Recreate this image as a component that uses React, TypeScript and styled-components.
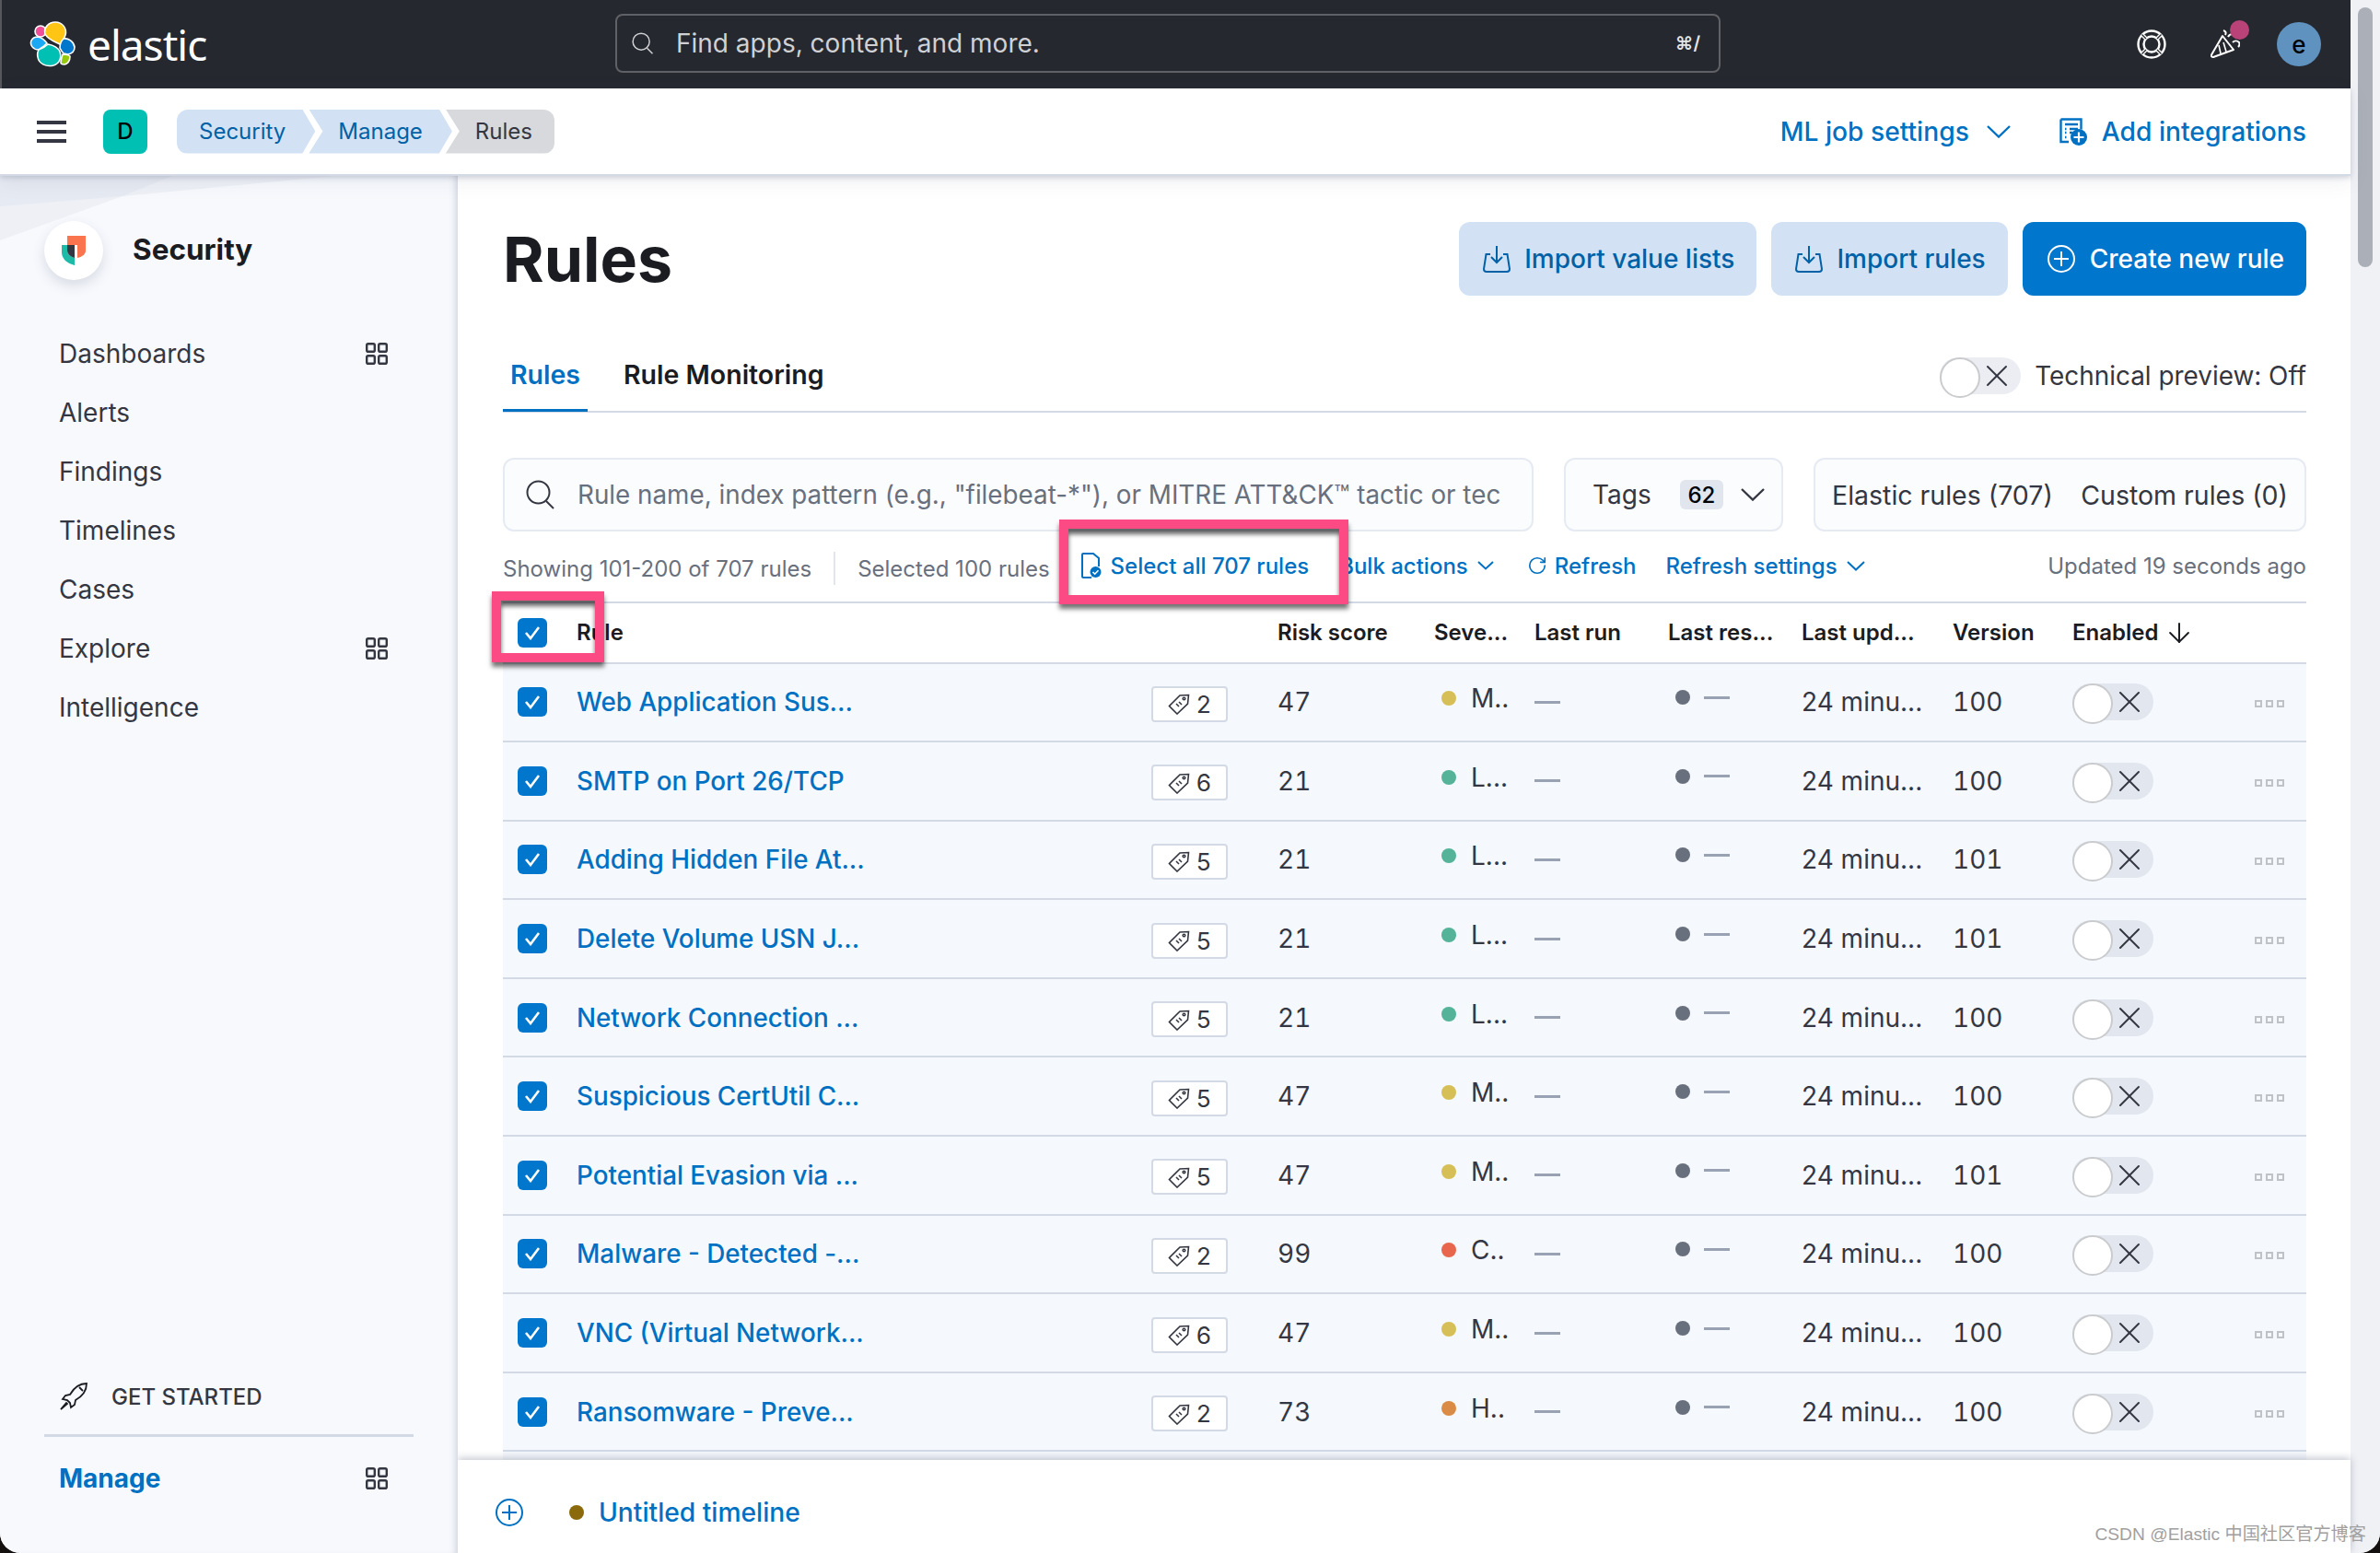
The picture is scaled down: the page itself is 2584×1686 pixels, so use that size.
import React from 'react';
import styled, { createGlobalStyle } from 'styled-components';
import { RotateCw, X, ArrowDown } from 'lucide-react';

const GlobalStyle = createGlobalStyle`
  html, body {
    margin: 0;
    padding: 0;
    background: #14100f;
    font-family: Inter, "Noto Sans", "Liberation Sans", sans-serif;
  }
  * { box-sizing: border-box; }
`;

const Page = styled.div`
  position: relative;
  width: 2584px;
  height: 1686px;
  display: flex;
  overflow: hidden;
  background: #fff;
  border-radius: 0 0 22px 22px;
  color: #343741;
`;

const Window = styled.div`
  width: 2552px;
  display: flex;
  flex-direction: column;
`;

const ScrollTrack = styled.div`
  width: 32px;
  background: #f0f1f5;
  padding: 8px;
`;

const ScrollThumb = styled.div`
  height: 282px;
  background: #abb0b8;
  border-radius: 8px;
`;

const TopBar = styled.header`
  height: 96px;
  flex: none;
  background: #25282f;
  border-left: 2px solid #55575c;
  display: flex;
  align-items: center;
  padding: 0 32px 0 30px;
`;

const Brand = styled.div`
  width: 636px;
  display: flex;
  align-items: center;
  gap: 13px;
  color: #fff;
  font-family: "Noto Sans", sans-serif;
  font-size: 46px;
  font-weight: 400;
  letter-spacing: -1px;
`;

const GlobalSearch = styled.div`
  width: 1200px;
  height: 64px;
  border: 2px solid #5f6166;
  border-radius: 8px;
  display: flex;
  align-items: center;
  padding: 0 20px 0 16px;
  gap: 24px;
  color: #d0d1d4;
  font-size: 28px;
  margin-top: -2px;
`;

const Shortcut = styled.span`
  margin-left: auto;
  font-size: 20px;
  font-weight: 600;
  color: #e4e5e7;
`;

const TopActions = styled.div`
  margin-left: auto;
  display: flex;
  align-items: center;
  color: #fff;
`;

const Cheer = styled.div`
  position: relative;
  display: flex;
  margin: 0 40px 0 48px;
`;

const CheerDot = styled.span`
  position: absolute;
  top: -10px;
  right: -10px;
  width: 21px;
  height: 21px;
  border-radius: 50%;
  background: #b94379;
`;

const Avatar = styled.div`
  width: 48px;
  height: 48px;
  border-radius: 50%;
  background: #6092c0;
  color: #000;
  font-size: 26px;
  font-weight: 500;
  display: flex;
  align-items: center;
  justify-content: center;
`;

const SubBar = styled.div`
  position: relative;
  z-index: 3;
  height: 95px;
  flex: none;
  background: #fff;
  border-bottom: 2px solid #d3dae6;
  box-shadow: 0 2px 5px rgba(80, 90, 120, 0.22), 0 6px 20px rgba(90, 100, 130, 0.1);
  display: flex;
  align-items: center;
  padding: 0 48px 0 40px;
`;

const Burger = styled.div`
  width: 32px;
  height: 24px;
  margin-right: 40px;
  border-top: 4px solid #343741;
  border-bottom: 4px solid #343741;
  position: relative;
  &::after {
    content: '';
    position: absolute;
    left: 0;
    right: 0;
    top: 6px;
    height: 4px;
    background: #343741;
  }
`;

const SpaceBadge = styled.div`
  width: 48px;
  height: 48px;
  border-radius: 8px;
  background: #00bfb3;
  color: #000;
  font-size: 24px;
  font-weight: 500;
  display: flex;
  align-items: center;
  justify-content: center;
  margin-right: 32px;
`;

const Crumbs = styled.nav`
  display: flex;
  align-items: center;
`;

const Crumb = styled.span<{ $active?: boolean; $first?: boolean }>`
  height: 48px;
  display: flex;
  align-items: center;
  font-size: 24px;
  background: ${(p) => (p.$active ? '#d8d9dc' : '#d2e2f4')};
  color: ${(p) => (p.$active ? '#343741' : '#0061a6')};
  padding: ${(p) => (p.$first ? '0 32px 0 24px' : p.$active ? '0 24px 0 32px' : '0 32px 0 32px')};
  margin-left: ${(p) => (p.$first ? '0' : '-7px')};
  border-radius: ${(p) => (p.$first ? '12px 0 0 12px' : p.$active ? '0 12px 12px 0' : '0')};
  clip-path: ${(p) =>
    p.$first
      ? 'polygon(0 0, calc(100% - 14px) 0, 100% 50%, calc(100% - 14px) 100%, 0 100%)'
      : p.$active
      ? 'polygon(0 0, 100% 0, 100% 100%, 0 100%, 15px 50%)'
      : 'polygon(0 0, calc(100% - 14px) 0, 100% 50%, calc(100% - 14px) 100%, 0 100%, 15px 50%)'};
`;

const SubActions = styled.div`
  margin-left: auto;
  display: flex;
  align-items: center;
  color: #0071c2;
  font-size: 28.2px;
  font-weight: 500;
`;

const SubLink = styled.span<{ $gap: number }>`
  display: flex;
  align-items: center;
  gap: ${(p) => p.$gap}px;
  margin-left: 53px;
`;

const Body = styled.div`
  flex: 1;
  min-height: 0;
  display: flex;
`;

const Sidebar = styled.aside`
  position: relative;
  z-index: 2;
  width: 497px;
  flex: none;
  background: #f7f9fd;
  box-shadow: inset -7px 0 9px -6px rgba(80, 90, 120, 0.3);
  display: flex;
  flex-direction: column;
  padding: 49px 48px 49px;
  overflow: hidden;
`;

const SidebarArt = styled.svg`
  position: absolute;
  left: 0;
  top: 0;
`;

const SolutionHead = styled.div`
  position: relative;
  display: flex;
  align-items: center;
  gap: 32px;
  font-size: 31.5px;
  font-weight: 700;
  color: #1a1c21;
  margin-bottom: 48px;
`;

const SolutionName = styled.span`
  padding-bottom: 4px;
`;

const SolutionLogo = styled.div`
  width: 64px;
  height: 64px;
  border-radius: 50%;
  background: #fff;
  box-shadow: 0 6px 14px rgba(60, 70, 100, 0.16);
  display: flex;
  align-items: center;
  justify-content: center;
`;

const NavList = styled.div`
  display: flex;
  flex-direction: column;
`;

const NavItem = styled.div<{ $active?: boolean }>`
  height: 64px;
  padding: 0 28px 0 16px;
  display: flex;
  align-items: center;
  justify-content: space-between;
  font-size: 28px;
  font-weight: ${(p) => (p.$active ? 700 : 400)};
  color: ${(p) => (p.$active ? '#0071c2' : '#343741')};
`;

const SideFoot = styled.div`
  margin-top: auto;
`;

const GetStarted = styled.div`
  display: flex;
  align-items: center;
  gap: 26px;
  padding: 0 0 26px 17px;
  font-size: 24px;
  font-weight: 500;
  color: #343741;
  border-bottom: 3px solid #d3dae6;
  margin-bottom: 13px;
`;

const Workspace = styled.div`
  flex: 1;
  min-width: 0;
  display: flex;
  flex-direction: column;
`;

const Scroller = styled.main`
  flex: 1;
  min-height: 0;
  overflow: hidden;
  padding: 50px 48px 0 49px;
`;

const TitleRow = styled.div`
  display: flex;
  align-items: center;
  justify-content: space-between;
  height: 80px;
`;

const Title = styled.h1`
  margin: 0;
  font-size: 68px;
  font-weight: 700;
  color: #1a1c21;
`;

const Buttons = styled.div`
  display: flex;
  gap: 16px;
`;

const Button = styled.div<{ $fill?: boolean }>`
  height: 80px;
  border-radius: 12px;
  padding: ${(p) => (p.$fill ? '0 24px 0 27px' : '0 24px 0 25px')};
  display: flex;
  align-items: center;
  gap: ${(p) => (p.$fill ? 16 : 14)}px;
  font-size: 28px;
  font-weight: 500;
  background: ${(p) => (p.$fill ? '#0077cc' : '#d2e2f4')};
  color: ${(p) => (p.$fill ? '#fff' : '#0061a6')};
`;

const TabBar = styled.div`
  margin-top: 55px;
  height: 72px;
  border-bottom: 2px solid #d3dae6;
  display: flex;
  align-items: center;
  gap: 31px;
`;

const Tab = styled.div<{ $active?: boolean }>`
  height: 72px;
  padding: 0 8px 6px;
  display: flex;
  align-items: center;
  font-size: 28.5px;
  font-weight: 600;
  color: ${(p) => (p.$active ? '#0071c2' : '#1a1c21')};
  border-bottom: 3px solid ${(p) => (p.$active ? '#0071c2' : 'transparent')};
`;

const Preview = styled.div`
  margin-left: auto;
  display: flex;
  align-items: center;
  gap: 15px;
  font-size: 27.9px;
  color: #343741;
  padding-bottom: 6px;
`;

const Switch = styled.div<{ $light?: boolean }>`
  position: relative;
  width: 88px;
  height: 40px;
  border-radius: 20px;
  background: ${(p) => (p.$light ? '#ebedf2' : '#e2e6ee')};
  display: flex;
  align-items: center;
  justify-content: flex-end;
  padding-right: 6px;
  flex: none;
  color: #343741;
  &::before {
    content: '';
    position: absolute;
    left: 0;
    top: 0;
    width: 40px;
    height: 40px;
    border-radius: 50%;
    background: #fff;
    border: 2px solid #c9cbcd;
  }
`;

const FilterRow = styled.div`
  margin-top: 49px;
  display: flex;
  gap: 33px;
`;

const Field = styled.div<{ $width?: number; $pad: string; $size?: number }>`
  height: 80px;
  background: #fbfcfd;
  border: 2px solid #e6ebf3;
  border-radius: 12px;
  display: flex;
  align-items: center;
  justify-content: space-between;
  font-size: ${(p) => p.$size ?? 28}px;
  color: #343741;
  padding: ${(p) => p.$pad};
  ${(p) => (p.$width ? `width: ${p.$width}px; flex: none;` : 'flex: 1; min-width: 0; justify-content: flex-start;')}
`;

const Placeholder = styled.span`
  margin-left: 24px;
  color: #69707d;
  white-space: nowrap;
  overflow: hidden;
`;

const TagCount = styled.span`
  width: 47px;
  height: 32px;
  margin-left: 12px;
  border-radius: 6px;
  background: #e0e5ee;
  color: #000;
  font-size: 24px;
  font-weight: 500;
  display: flex;
  align-items: center;
  justify-content: center;
`;

const UtilBar = styled.div`
  height: 76px;
  display: flex;
  align-items: center;
  font-size: 24px;
  color: #69707d;
  white-space: nowrap;
`;

const UtilText = styled.span`
  padding-top: 4px;
`;

const UtilDivider = styled.span`
  width: 2px;
  height: 36px;
  background: #e3e6ec;
  margin: 4px 24px 0 24px;
`;

const UtilLink = styled.span<{ $left?: number; $gap?: number }>`
  display: flex;
  align-items: center;
  gap: ${(p) => p.$gap ?? 10}px;
  color: #0071c2;
  font-weight: 500;
  margin-left: ${(p) => p.$left ?? 0}px;
  padding-bottom: 2px;
`;

const Updated = styled.span`
  margin-left: auto;
  padding-bottom: 2px;
`;

const cols = '80px 761px 170px 109px 145px 145px 164px 130px 150px 1fr';

const HeadRow = styled.div`
  display: grid;
  grid-template-columns: ${cols};
  align-items: center;
  height: 67.5px;
  border-top: 2px solid #d3dae6;
  border-bottom: 2px solid #d3dae6;
  font-size: 24px;
  font-weight: 600;
  color: #1a1c21;
  white-space: nowrap;
`;

const HeadCell = styled.span`
  display: flex;
  align-items: center;
  gap: 6px;
`;

const Row = styled.div`
  display: grid;
  grid-template-columns: ${cols};
  align-items: center;
  height: 85.6px;
  background: #f5f8fc;
  border-bottom: 2px solid #d3dae6;
  font-size: 28px;
  color: #343741;
  white-space: nowrap;
`;

const NumCell = styled.span`
  font-variant-numeric: tabular-nums;
`;

const CheckCell = styled.div`
  display: flex;
  padding-left: 16px;
`;

const Check = styled.span`
  width: 32px;
  height: 32px;
  border-radius: 6px;
  background: #0077cc;
  display: flex;
  align-items: center;
  justify-content: center;
`;

const RuleCell = styled.div`
  display: flex;
  align-items: center;
  justify-content: space-between;
  padding-right: 54px;
`;

const RuleName = styled.span`
  color: #0071c2;
  font-size: 27.8px;
  font-weight: 500;
`;

const TagBadge = styled.span`
  width: 83px;
  height: 39px;
  margin-top: 4px;
  background: #fff;
  border: 2px solid #d3dae6;
  border-radius: 4px;
  display: flex;
  align-items: center;
  justify-content: center;
  gap: 7px;
  font-size: 26px;
  font-variant-numeric: tabular-nums;
`;

const Severity = styled.div`
  display: flex;
  align-items: center;
  gap: 16px;
  padding: 0 0 8px 8px;
`;

const Dot = styled.span<{ $color: string }>`
  width: 16px;
  height: 16px;
  border-radius: 50%;
  background: ${(p) => p.$color};
  flex: none;
`;

const Dash = styled.span`
  display: block;
  width: 28px;
  height: 3px;
  background: #98a2b3;
`;

const Result = styled.div`
  display: flex;
  align-items: center;
  gap: 15px;
  padding: 0 0 10px 8px;
`;

const MoreDots = styled.div`
  display: flex;
  justify-content: flex-end;
  gap: 4px;
  padding: 4px 24px 0 0;
`;

const MoreDot = styled.span`
  width: 8px;
  height: 8px;
  border: 2px solid #bfc2c7;
`;

const TimelineBar = styled.div`
  position: relative;
  z-index: 1;
  height: 101px;
  flex: none;
  background: #fff;
  box-shadow: 0 -2px 8px rgba(60, 70, 100, 0.3);
  display: flex;
  align-items: center;
  padding: 12px 0 0 41px;
  color: #0071c2;
  font-size: 28.2px;
  font-weight: 500;
`;

const TimelineDot = styled.span`
  width: 16px;
  height: 16px;
  border-radius: 50%;
  background: #8a6a0a;
  margin: 0 16px 0 50px;
`;

const Highlight = styled.div<{ $x: number; $y: number; $w: number; $h: number }>`
  position: absolute;
  left: ${(p) => p.$x}px;
  top: ${(p) => p.$y}px;
  width: ${(p) => p.$w}px;
  height: ${(p) => p.$h}px;
  border: 10px solid #fc4a85;
  box-shadow: 0 5px 5px rgba(0, 0, 0, 0.55), inset 0 6px 5px rgba(0, 0, 0, 0.6);
  z-index: 6;
`;

const Watermark = styled.div`
  position: absolute;
  right: 15px;
  bottom: 8px;
  z-index: 7;
  font-family: "Liberation Sans", "Noto Sans CJK SC", sans-serif;
  font-size: 19.2px;
  color: #a0a0a0;
`;

const ElasticLogo = () => (
  <svg width="50" height="50" viewBox="0 0 50 50">
    <g stroke="#fff" strokeWidth="1.6">
      <ellipse cx="12" cy="11" rx="6" ry="6" fill="#f04e98" />
      <path d="M17 14c-2-7 4-13 11-13 8 0 13 7 11 14-1 4-4 7-6 10-6-3-13-5-16-11z" fill="#fec514" />
      <path d="M9 17c5 1 8 4 10 7-3 3-6 5-9 7C4 31 0 26 2 21c1-2 4-4 7-4z" fill="#1ba9f5" />
      <path d="M37 19c5-1 11 3 12 9 0 4-3 7-7 8-2 0-4-1-5-1-2-2-3-4-4-6 0-4 2-8 4-10z" fill="#0077cc" />
      <path d="M20 25c6 1 11 4 13 8 2 6 0 13-7 15-8 2-16-2-17-9-1-4 0-6 1-8 3-1 7-3 10-6z" fill="#00bfb3" />
      <path d="M36 36c3 0 7 1 8 2 0 4-2 8-6 9-2 0-4 0-4-2 0-3 1-6 2-9z" fill="#93c90e" />
    </g>
  </svg>
);

const SecurityLogo = () => (
  <svg width="26" height="32" viewBox="0 0 26 32">
    <path d="M6 0H26V16C26 20 22 23 17 24V10H6z" fill="#fa744e" />
    <path d="M0 10H6V16C6 20 10 23 14 24V32C6 30 0 25 0 18z" fill="#1ebaa8" />
    <path d="M6 10H14V24C10 23 6 20 6 16z" fill="#343741" />
  </svg>
);

const SearchIcon = ({ size = 24, color = 'currentColor' }: { size?: number; color?: string }) => (
  <svg width={size} height={size} viewBox="0 0 32 32" fill="none" stroke={color} strokeWidth="2">
    <circle cx="13.5" cy="13.5" r="12" />
    <path d="M22 23l8 8" />
  </svg>
);

const Chevron = ({ w, h, sw = 2.4 }: { w: number; h: number; sw?: number }) => (
  <svg width={w} height={h} viewBox={`0 0 ${w} ${h}`} fill="none" stroke="currentColor" strokeWidth={sw}>
    <path d={`M1 1L${w / 2} ${h - 1.5}L${w - 1} 1`} />
  </svg>
);

const LifeRing = () => (
  <svg width="32" height="32" viewBox="0 0 32 32" fill="none" stroke="#fff" strokeWidth="2.4">
    <circle cx="16" cy="16" r="14.5" />
    <circle cx="16" cy="16" r="8.5" />
    <path d="M5.5 5.5l4.5 4.5M26.5 5.5L22 10M5.5 26.5L10 22M26.5 26.5L22 22" strokeWidth="4" />
    <path d="M5.5 5.5l4.5 4.5M26.5 5.5L22 10M5.5 26.5L10 22M26.5 26.5L22 22" stroke="#25282f" strokeWidth="1.4" />
  </svg>
);

const CheerIcon = () => (
  <svg width="32" height="32" viewBox="0 0 32 32" fill="none" stroke="#fff" strokeWidth="2">
    <path d="M13 7l12 15-22 8c-1.5 0-2.5-1-2-2.5z" strokeLinejoin="round" />
    <path d="M9 17l2 9M14 14l3 10" strokeWidth="1.6" />
    <path d="M14 1c3 1 3 3 2 5M19 8c1-2 3-3 5-3M24 14c2-2 5-2 7 0 1 2 0 4-1 5" />
  </svg>
);

const GridIcon = () => (
  <svg width="24" height="24" viewBox="0 0 24 24" fill="none" stroke="#343741" strokeWidth="2.4">
    <rect x="1.2" y="1.2" width="8.6" height="8.6" rx="1.6" />
    <rect x="14.2" y="1.2" width="8.6" height="8.6" rx="1.6" />
    <rect x="1.2" y="14.2" width="8.6" height="8.6" rx="1.6" />
    <rect x="14.2" y="14.2" width="8.6" height="8.6" rx="1.6" />
  </svg>
);

const ImportIcon = () => (
  <svg width="32" height="30" viewBox="0 0 30 30" fill="none" stroke="currentColor" strokeWidth="2">
    <path d="M8 10H3.5L1 26c0 2 1 3 3 3h22c2 0 3-1 3-3l-2.5-16H22" />
    <path d="M15 1v18M9 13l6 6 6-6" />
  </svg>
);

const PlusCircle = ({ size = 30 }: { size?: number }) => (
  <svg width={size} height={size} viewBox="0 0 30 30" fill="none" stroke="currentColor" strokeWidth="2">
    <circle cx="15" cy="15" r="14" />
    <path d="M15 7v16M7 15h16" />
  </svg>
);

const IntegrationsIcon = () => (
  <svg width="30" height="30" viewBox="0 0 30 30">
    <path d="M1.5 1.5h22v11M10 26H1.5V1.5" fill="none" stroke="#0071c2" strokeWidth="2.4" />
    <path d="M6 7h14M6 12h1.5M11 12h9M6 16h1.5M11 16h3M6 21h1.5" stroke="#0071c2" strokeWidth="2.4" />
    <circle cx="21" cy="21" r="9" fill="#0071c2" />
    <path d="M21 15.5v11M15.5 21h11" stroke="#fff" strokeWidth="2.2" />
  </svg>
);

const SelectAllIcon = () => (
  <svg width="22" height="28" viewBox="0 0 22 28" fill="none" stroke="#0071c2" strokeWidth="2">
    <path d="M11 27H2c-1 0-1-1-1-1V2s0-1 1-1h11l6 5v9" />
    <circle cx="15.5" cy="21" r="6" fill="#0071c2" stroke="none" />
    <path d="M12.5 21l2.2 2.2 3.8-4" stroke="#fff" strokeWidth="1.6" />
  </svg>
);

const CheckMark = () => (
  <svg width="18" height="16" viewBox="0 0 18 16" fill="none" stroke="#fff" strokeWidth="2.6">
    <path d="M2 8l5 6L16 2" />
  </svg>
);

const TagIcon = () => (
  <svg width="24" height="24" viewBox="0 0 24 24" fill="none" stroke="#343741" strokeWidth="1.6">
    <path d="M22.5 2.5l-1 9.5L10 23 1.5 14.5 13 3z" />
    <circle cx="17.5" cy="6.5" r="1.3" />
    <path d="M9 12l3 3M12 10l3 3" />
  </svg>
);

const RocketIcon = () => (
  <svg width="30" height="30" viewBox="0 0 30 30" fill="none" stroke="#1a1c21" strokeWidth="1.8">
    <path d="M29 1c-8 0-14 5-18 12l-5 1-3 4 5 1 3 3 1 5 4-3 1-5c7-4 12-10 12-18z" />
    <path d="M21 5l4 4" />
    <path d="M7 22l-6 7 7-6z" fill="#1a1c21" />
  </svg>
);

const rules = [
  { name: 'Web Application Sus...', tags: 2, risk: 47, sev: 'M..', color: '#d6bf57', version: 100 },
  { name: 'SMTP on Port 26/TCP', tags: 6, risk: 21, sev: 'L...', color: '#54b399', version: 100 },
  { name: 'Adding Hidden File At...', tags: 5, risk: 21, sev: 'L...', color: '#54b399', version: 101 },
  { name: 'Delete Volume USN J...', tags: 5, risk: 21, sev: 'L...', color: '#54b399', version: 101 },
  { name: 'Network Connection ...', tags: 5, risk: 21, sev: 'L...', color: '#54b399', version: 100 },
  { name: 'Suspicious CertUtil C...', tags: 5, risk: 47, sev: 'M..', color: '#d6bf57', version: 100 },
  { name: 'Potential Evasion via ...', tags: 5, risk: 47, sev: 'M..', color: '#d6bf57', version: 101 },
  { name: 'Malware - Detected -...', tags: 2, risk: 99, sev: 'C..', color: '#e7664c', version: 100 },
  { name: 'VNC (Virtual Network...', tags: 6, risk: 47, sev: 'M..', color: '#d6bf57', version: 100 },
  { name: 'Ransomware - Preve...', tags: 2, risk: 73, sev: 'H..', color: '#da8b45', version: 100 },
];

const navItems = [
  { label: 'Dashboards', grid: true },
  { label: 'Alerts' },
  { label: 'Findings' },
  { label: 'Timelines' },
  { label: 'Cases' },
  { label: 'Explore', grid: true },
  { label: 'Intelligence' },
];

const App: React.FC = () => {
  return (
    <Page>
      <GlobalStyle />
      <Window>
        <TopBar>
          <Brand>
            <ElasticLogo />
            <span>elastic</span>
          </Brand>
          <GlobalSearch>
            <SearchIcon />
            <span>Find apps, content, and more.</span>
            <Shortcut>⌘/</Shortcut>
          </GlobalSearch>
          <TopActions>
            <LifeRing />
            <Cheer>
              <CheerIcon />
              <CheerDot />
            </Cheer>
            <Avatar>e</Avatar>
          </TopActions>
        </TopBar>
        <SubBar>
          <Burger />
          <SpaceBadge>D</SpaceBadge>
          <Crumbs>
            <Crumb $first>Security</Crumb>
            <Crumb>Manage</Crumb>
            <Crumb $active>Rules</Crumb>
          </Crumbs>
          <SubActions>
            <SubLink $gap={19}>
              ML job settings
              <Chevron w={26} h={14} />
            </SubLink>
            <SubLink $gap={16}>
              <IntegrationsIcon />
              Add integrations
            </SubLink>
          </SubActions>
        </SubBar>
        <Body>
          <Sidebar>
            <SidebarArt width="497" height="80" viewBox="0 0 497 80">
              <path d="M0 0H363L133 22 0 70z" fill="#eef0f6" />
              <path d="M0 0H187L133 22 0 33z" fill="#e6eaf2" />
            </SidebarArt>
            <SolutionHead>
              <SolutionLogo>
                <SecurityLogo />
              </SolutionLogo>
              <SolutionName>Security</SolutionName>
            </SolutionHead>
            <NavList>
              {navItems.map((item) => (
                <NavItem key={item.label}>
                  {item.label}
                  {item.grid && <GridIcon />}
                </NavItem>
              ))}
            </NavList>
            <SideFoot>
              <GetStarted>
                <RocketIcon />
                GET STARTED
              </GetStarted>
              <NavItem $active>
                Manage
                <GridIcon />
              </NavItem>
            </SideFoot>
          </Sidebar>
          <Workspace>
            <Scroller>
              <TitleRow>
                <Title>Rules</Title>
                <Buttons>
                  <Button>
                    <ImportIcon />
                    Import value lists
                  </Button>
                  <Button>
                    <ImportIcon />
                    Import rules
                  </Button>
                  <Button $fill>
                    <PlusCircle />
                    Create new rule
                  </Button>
                </Buttons>
              </TitleRow>
              <TabBar>
                <Tab $active>Rules</Tab>
                <Tab>Rule Monitoring</Tab>
                <Preview>
                  <Switch $light>
                    <X size={40} strokeWidth={1.2} />
                  </Switch>
                  Technical preview: Off
                </Preview>
              </TabBar>
              <FilterRow>
                <Field $pad="0 20px 0 23px" $size={27.8}>
                  <SearchIcon size={32} color="#343741" />
                  <Placeholder>Rule name, index pattern (e.g., "filebeat-*"), or MITRE ATT&CK™ tactic or tec</Placeholder>
                </Field>
                <Field $width={238} $pad="0 18px 0 29px">
                  <span>Tags</span>
                  <TagCount>62</TagCount>
                  <Chevron w={26} h={14} />
                </Field>
                <Field $width={535} $pad="0 18px" $size={28.5}>
                  <span>Elastic rules (707)</span>
                  <span>Custom rules (0)</span>
                </Field>
              </FilterRow>
              <UtilBar>
                <UtilText>Showing 101-200 of 707 rules</UtilText>
                <UtilDivider />
                <UtilText>Selected 100 rules</UtilText>
                <UtilLink $left={34}>
                  <SelectAllIcon />
                  Select all 707 rules
                </UtilLink>
                <UtilLink $left={33} $gap={10}>
                  Bulk actions
                  <Chevron w={18} h={10} sw={2} />
                </UtilLink>
                <UtilLink $left={36} $gap={8}>
                  <RotateCw size={22} strokeWidth={1.8} />
                  Refresh
                </UtilLink>
                <UtilLink $left={32}>
                  Refresh settings
                  <Chevron w={20} h={11} sw={2} />
                </UtilLink>
                <Updated>Updated 19 seconds ago</Updated>
              </UtilBar>
              <HeadRow>
                <CheckCell>
                  <Check>
                    <CheckMark />
                  </Check>
                </CheckCell>
                <HeadCell>Rule</HeadCell>
                <HeadCell>Risk score</HeadCell>
                <HeadCell>Seve...</HeadCell>
                <HeadCell>Last run</HeadCell>
                <HeadCell>Last res...</HeadCell>
                <HeadCell>Last upd...</HeadCell>
                <HeadCell>Version</HeadCell>
                <HeadCell>
                  Enabled
                  <ArrowDown size={34} strokeWidth={1.4} />
                </HeadCell>
              </HeadRow>
              {rules.map((rule) => (
                <Row key={rule.name}>
                  <CheckCell>
                    <Check>
                      <CheckMark />
                    </Check>
                  </CheckCell>
                  <RuleCell>
                    <RuleName>{rule.name}</RuleName>
                    <TagBadge>
                      <TagIcon />
                      {rule.tags}
                    </TagBadge>
                  </RuleCell>
                  <NumCell>{rule.risk}</NumCell>
                  <Severity>
                    <Dot $color={rule.color} />
                    {rule.sev}
                  </Severity>
                  <Dash />
                  <Result>
                    <Dot $color="#69707d" />
                    <Dash />
                  </Result>
                  <span>24 minu...</span>
                  <NumCell>{rule.version}</NumCell>
                  <Switch>
                    <X size={40} strokeWidth={1.2} />
                  </Switch>
                  <MoreDots>
                    <MoreDot />
                    <MoreDot />
                    <MoreDot />
                  </MoreDots>
                </Row>
              ))}
              <Row />
            </Scroller>
            <TimelineBar>
              <PlusCircle size={30} />
              <TimelineDot />
              Untitled timeline
            </TimelineBar>
          </Workspace>
        </Body>
      </Window>
      <ScrollTrack>
        <ScrollThumb />
      </ScrollTrack>
      <Highlight $x={1150} $y={564} $w={314} $h={92} />
      <Highlight $x={534} $y={642} $w={122} $h={77} />
      <Watermark>CSDN @Elastic 中国社区官方博客</Watermark>
    </Page>
  );
};

export default App;
